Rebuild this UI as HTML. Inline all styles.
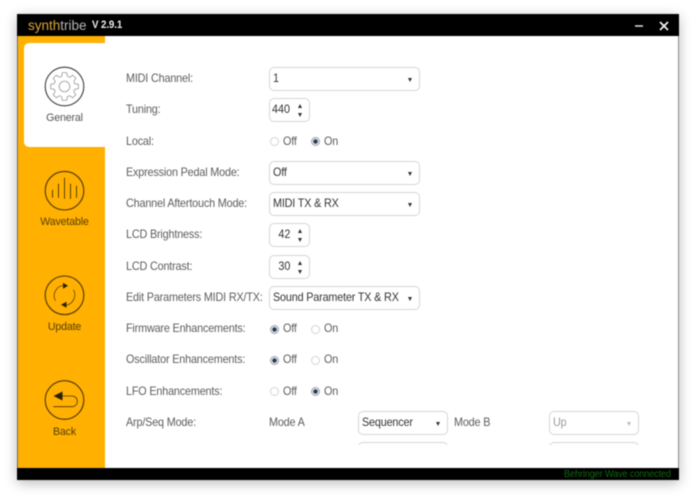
<!DOCTYPE html>
<html><head><meta charset="utf-8"><style>
html,body{margin:0;padding:0;width:696px;height:500px;overflow:hidden;background:#fff}
body{font-family:"Liberation Sans",sans-serif;position:relative}
#win{position:absolute;left:17px;top:14px;width:662px;height:466px;background:#fff;box-shadow:0 3px 12px rgba(0,0,0,.28);filter:blur(.42px)}
.a{position:absolute;left:0;top:0;width:662px;height:466px}
.t{position:absolute;white-space:nowrap;line-height:14px;height:14px;font-size:12px;letter-spacing:-.18px;color:#5c5c5c;transform:scaleX(.9);transform-origin:0 50%}
.s{position:absolute;box-sizing:border-box;border:1.2px solid #d6d6d6;border-radius:5px;height:24px;background:#fff}
.s span{position:absolute;left:2.5px;top:3.200px;line-height:14px;font-size:12px;letter-spacing:-.18px;color:#333;white-space:nowrap;transform:scaleX(.9);transform-origin:0 50%}
.s i{position:absolute;right:7.500px;top:10px;width:0;height:0;border-left:2.600px solid transparent;border-right:2.600px solid transparent;border-top:4px solid #333}
.n span{left:auto;right:19px;letter-spacing:0;transform-origin:100% 50%}
.n b{position:absolute;right:7.500px;top:5px;width:0;height:0;border-left:2.600px solid transparent;border-right:2.600px solid transparent;border-bottom:4px solid #333}
.n i{top:13.500px;right:7.500px}
.r{position:absolute;box-sizing:border-box;width:9px;height:9px;border-radius:50%;border:1px solid #d4d4d4;background:#fff}
.r.on{border:1px solid #9aa6b8;background:radial-gradient(circle,#2f3a4c 0,#2f3a4c 1.900px,#dfe4ec 2.500px)}
.x{color:#555;font-size:11.400px;text-align:center;width:87px;left:4px;letter-spacing:-.15px;transform:scaleX(.93);transform-origin:50% 50%}
</style></head><body>
<div id="win">
<div class="a" style="background:#000;height:22px"></div>
<div class="t" style="left:11px;top:5px;font-size:13.500px;letter-spacing:0;transform:none;color:#d9a63a">synth<span style="color:#b5b5b5">tribe</span></div>
<div class="t" style="left:74.500px;top:4px;font-size:10.800px;font-weight:bold;color:#f0f0f0;letter-spacing:-.1px">V 2.9.1</div>
<svg class="a" viewBox="0 0 662 466" style="pointer-events:none">
<path d="M618 12h8" stroke="#e0e0e0" stroke-width="1.500" fill="none"/>
<path d="M643 8l8 8M651 8l-8 8" stroke="#f2f2f2" stroke-width="1.700" fill="none"/>
</svg>
<div class="a" style="top:22px;width:87.500px;height:432px;background:#ffb000"></div>
<div class="a" style="left:7px;top:29px;width:81px;height:104px;background:#fff;border-radius:5px 0 0 5px"></div>
<div class="a" style="top:454px;height:12px;background:#000"></div>
<div class="a" style="left:0;top:22px;width:1px;height:432px;background:#6b6b6b"></div>
<div class="a" style="left:661px;top:22px;width:1px;height:432px;background:#8c8c8c"></div>
<div class="t" style="right:8px;left:auto;top:453.500px;font-size:9.800px;letter-spacing:-.12px;color:#0f6a10;transform:scaleX(.93);transform-origin:100% 50%">Behringer Wave connected</div>

<svg class="a" viewBox="0 0 662 466">
<g fill="none" stroke="#3d3d3d">
<g transform="translate(47.500,72.500)">
<circle r="19.300" stroke-width="1.100"/>
<circle r="5.300" stroke="#888" stroke-width=".7"/>
<circle r="10.500" stroke="#888" stroke-width=".7" stroke-dasharray="2.380 5.870" stroke-dashoffset="-2.930"/>
<g stroke="#888" stroke-width=".7">
<path d="M-2.890-10.090L-2.190-13.830H2.190L2.890-10.090"/>
<path d="M-2.890-10.090L-2.190-13.830H2.190L2.890-10.090" transform="rotate(45)"/>
<path d="M-2.890-10.090L-2.190-13.830H2.190L2.890-10.090" transform="rotate(90)"/>
<path d="M-2.890-10.090L-2.190-13.830H2.190L2.890-10.090" transform="rotate(135)"/>
<path d="M-2.890-10.090L-2.190-13.830H2.190L2.890-10.090" transform="rotate(180)"/>
<path d="M-2.890-10.090L-2.190-13.830H2.190L2.890-10.090" transform="rotate(225)"/>
<path d="M-2.890-10.090L-2.190-13.830H2.190L2.890-10.090" transform="rotate(270)"/>
<path d="M-2.890-10.090L-2.190-13.830H2.190L2.890-10.090" transform="rotate(315)"/>
</g>
</g>
<g transform="translate(47.500,176.700)" stroke="#4a3500">
<circle r="19.300" stroke-width="1.100"/>
<path d="M-12-1V7M-6-7V7M0-13V8M6-7V8M12-5V7" stroke-width=".9"/>
</g>
<g transform="translate(47.500,281.300)" stroke="#4a3500">
<circle r="19.300" stroke-width="1.100"/>
<path d="M-1-10A10.500 10.500 0 0 0-9 5.500M1 10A10.500 10.500 0 0 0 9-5.500" stroke-width=".7"/>
<path d="M-1.500-12.500L3.500-9.500L-1.500-6.500Z M2 12.500L-3.500 9.500L2 6.500Z" fill="#2c2000" stroke="none"/>
</g>
<g transform="translate(47.500,386)" stroke="#4a3500">
<circle r="19.300" stroke-width="1.100"/>
<path d="M-2-4H7.500A5.300 5.300 0 0 1 7.500 6.700H-11" stroke-width=".8"/>
<path d="M-11-4L-2-8.500V.5Z" fill="#2c2000" stroke="none"/>
</g>
</g>
</svg>
<div class="t x" style="top:97px">General</div>
<div class="t x" style="top:201px;color:#573f06">Wavetable</div>
<div class="t x" style="top:306px;color:#573f06">Update</div>
<div class="t x" style="top:411px;color:#573f06">Back</div>

<div class="t" style="left:109px;top:57px">MIDI Channel:</div>
<div class="t" style="left:109px;top:88px">Tuning:</div>
<div class="t" style="left:109px;top:120px">Local:</div>
<div class="t" style="left:109px;top:151px">Expression Pedal Mode:</div>
<div class="t" style="left:109px;top:182px">Channel Aftertouch Mode:</div>
<div class="t" style="left:109px;top:213px">LCD Brightness:</div>
<div class="t" style="left:109px;top:245px">LCD Contrast:</div>
<div class="t" style="left:109px;top:276px">Edit Parameters MIDI RX/TX:</div>
<div class="t" style="left:109px;top:307px">Firmware Enhancements:</div>
<div class="t" style="left:109px;top:338px">Oscillator Enhancements:</div>
<div class="t" style="left:109px;top:370px">LFO Enhancements:</div>
<div class="t" style="left:109px;top:401px">Arp/Seq Mode:</div>

<div class="s" style="left:252px;top:53px;width:151px"><span>1</span><i></i></div>
<div class="s n" style="left:252px;top:84px;width:41px"><span>440</span><b></b><i></i></div>
<div class="r" style="left:252.500px;top:122.500px"></div><div class="t" style="left:266px;top:120px">Off</div>
<div class="r on" style="left:293.500px;top:122.500px"></div><div class="t" style="left:307px;top:120px">On</div>
<div class="s" style="left:252px;top:147px;width:151px"><span>Off</span><i></i></div>
<div class="s" style="left:252px;top:178px;width:151px"><span>MIDI TX &amp; RX</span><i></i></div>
<div class="s n" style="left:252px;top:209px;width:41px"><span>42</span><b></b><i></i></div>
<div class="s n" style="left:252px;top:241px;width:41px"><span>30</span><b></b><i></i></div>
<div class="s" style="left:252px;top:272px;width:151px"><span>Sound Parameter TX &amp; RX</span><i></i></div>
<div class="r on" style="left:252.500px;top:310.500px"></div><div class="t" style="left:266px;top:307px">Off</div>
<div class="r" style="left:293.500px;top:310.500px"></div><div class="t" style="left:307px;top:307px">On</div>
<div class="r on" style="left:252.500px;top:341.500px"></div><div class="t" style="left:266px;top:338px">Off</div>
<div class="r" style="left:293.500px;top:341.500px"></div><div class="t" style="left:307px;top:338px">On</div>
<div class="r" style="left:252.500px;top:372.500px"></div><div class="t" style="left:266px;top:370px">Off</div>
<div class="r on" style="left:293.500px;top:372.500px"></div><div class="t" style="left:307px;top:370px">On</div>
<div class="t" style="left:252px;top:401px">Mode A</div>
<div class="s" style="left:341px;top:397px;width:90px"><span>Sequencer</span><i></i></div>
<div class="t" style="left:437px;top:401px">Mode B</div>
<div class="s" style="left:532px;top:397px;width:90px"><span style="color:#999">Up</span><i style="border-top-color:#bbb"></i></div>
<div style="position:absolute;left:341px;top:428px;width:90px;height:3px;overflow:hidden"><div class="s" style="left:0;top:0;width:90px"></div></div>
<div style="position:absolute;left:532px;top:428px;width:90px;height:3px;overflow:hidden"><div class="s" style="left:0;top:0;width:90px"></div></div>
</div>
</body></html>
